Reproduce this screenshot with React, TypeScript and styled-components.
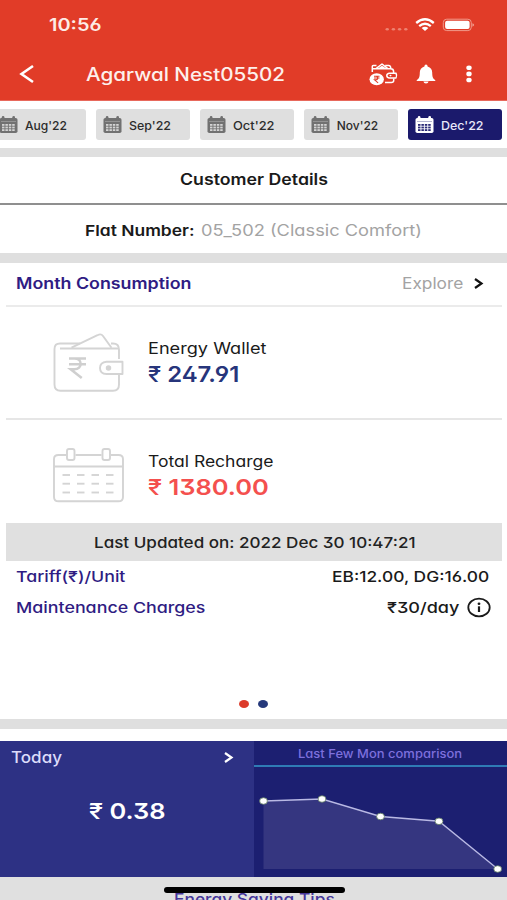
import React from 'react';
import styled, { createGlobalStyle } from 'styled-components';

const GlobalStyle = createGlobalStyle`
  * { box-sizing: border-box; }
  html, body { margin: 0; padding: 0; overflow: hidden; }
  body { background: #fff; font-family: Inter, "Liberation Sans", sans-serif; }
`;

const red = '#e13c28';
const gray = '#dfdfdf';
const indigo = '#2f1c83';

const Screen = styled.div`
  width: 507px;
  height: 900px;
  overflow: hidden;
  background: #fff;
  display: flex;
  flex-direction: column;
`;

/* Text drawn in an extended width: the slot reserves the final width. */
const Slot = styled.span<{ $w: number }>`
  display: block;
  flex: none;
  width: ${(p) => p.$w}px;
`;

const Glyphs = styled.span<{ $size: number; $weight: number; $color: string; $sx: number; $dy: number }>`
  display: inline-block;
  vertical-align: top;
  white-space: pre;
  line-height: 20px;
  font-size: ${(p) => p.$size}px;
  font-weight: ${(p) => p.$weight};
  font-feature-settings: 'cv11', 'ss01';
  color: ${(p) => p.$color};
  transform-origin: 0 50%;
  transform: translateY(${(p) => p.$dy}px) scaleX(${(p) => p.$sx});
`;

const Currency = styled.span`
  font-weight: 500;
`;

type LabelProps = {
  children: React.ReactNode;
  w: number;
  sx: number;
  size?: number;
  weight?: number;
  color?: string;
  dy?: number;
};

function Label({ children, w, sx, size = 15.5, weight = 400, color = '#1a1a1a', dy = 0 }: LabelProps) {
  return (
    <Slot $w={w}>
      <Glyphs $size={size} $weight={weight} $color={color} $sx={sx} $dy={dy}>{children}</Glyphs>
    </Slot>
  );
}

const Header = styled.header`
  flex: none;
  height: 101px;
  background: ${red};
  border-bottom: 1px solid #e8695c;
`;

const StatusBar = styled.div`
  display: flex;
  align-items: center;
  justify-content: space-between;
  height: 49px;
  padding: 0 31px 0 49px;
`;

const StatusIcons = styled.div`
  display: flex;
  align-items: center;
`;

const TitleBar = styled.div`
  display: flex;
  align-items: center;
  height: 50px;
  padding: 0 35px 0 20px;
`;

const TitleSlot = styled.div`
  flex: 1;
  margin-left: 52px;
`;

const Actions = styled.div`
  display: flex;
  align-items: center;
`;

const Tabs = styled.nav`
  flex: none;
  display: flex;
  gap: 9.7px;
  height: 47px;
  padding: 8px 5px 0 0;
  justify-content: flex-end;
`;

const Tab = styled.div<{ $active?: boolean }>`
  flex: none;
  display: flex;
  align-items: center;
  gap: 7px;
  width: 94.3px;
  height: 31px;
  padding-left: 7px;
  border-radius: 3px;
  background: ${(p) => (p.$active ? '#1b1a6c' : gray)};
`;

const Band = styled.div<{ $h: number }>`
  flex: none;
  height: ${(p) => p.$h}px;
  background: ${gray};
`;

const CenterRow = styled.div<{ $h: number; $line?: boolean }>`
  flex: none;
  display: flex;
  justify-content: center;
  align-items: center;
  gap: 6px;
  height: ${(p) => p.$h}px;
  border-bottom: ${(p) => (p.$line ? '2px solid #8f8f8f' : '0')};
`;

const Card = styled.section`
  flex: none;
  height: 456px;
  padding: 0 5px 0 6px;
`;

const CardHead = styled.div`
  display: flex;
  align-items: center;
  height: 44px;
  padding: 0 19px 2px 10px;
  border-bottom: 2px solid #ebebeb;
`;

const Spacer = styled.div`
  flex: 1;
`;

const Metric = styled.div<{ $h: number; $top: number; $line?: boolean }>`
  display: flex;
  height: ${(p) => p.$h}px;
  padding: ${(p) => p.$top}px 0 0 46px;
  gap: 23px;
  border-bottom: ${(p) => (p.$line ? '2px solid #e6e6e6' : '0')};
`;

const MetricText = styled.div`
  display: flex;
  flex-direction: column;
  gap: 6px;
  padding-top: 5px;
`;

const Updated = styled.div`
  display: flex;
  align-items: center;
  justify-content: center;
  height: 38px;
  background: #e0e0e0;
`;

const InfoRow = styled.div<{ $pad: number }>`
  display: flex;
  align-items: center;
  justify-content: space-between;
  height: 31px;
  padding: 0 ${(p) => p.$pad}px 0 9.5px;
`;

const WithIcon = styled.div`
  display: flex;
  align-items: center;
  gap: 7px;
`;

const Pager = styled.div`
  display: flex;
  justify-content: center;
  gap: 9px;
  padding: 77px 1px 0 0;
`;

const Dot = styled.i<{ $color: string }>`
  width: 10px;
  height: 8px;
  border-radius: 50%;
  background: ${(p) => p.$color};
`;

const Panels = styled.section`
  flex: none;
  display: grid;
  grid-template-columns: 253.5px 1fr;
  height: 136px;
  margin-top: 12px;
`;

const TodayPanel = styled.div`
  background: #2d3184;
`;

const TodayHead = styled.div`
  display: flex;
  align-items: center;
  justify-content: space-between;
  height: 32px;
  padding: 0 20.5px 0 10.5px;
`;

const TodayValue = styled.div`
  display: flex;
  justify-content: center;
  padding-top: 28px;
`;

const ChartPanel = styled.div`
  background: #1c1f71;
`;

const ChartTitle = styled.div`
  display: flex;
  align-items: center;
  justify-content: center;
  height: 26px;
  border-bottom: 2px solid #2f7bb5;
`;

const Footer = styled.footer`
  position: relative;
  flex: none;
  display: flex;
  justify-content: center;
  height: 23px;
  padding-top: 12px;
  background: #e0e0e0;
`;

const HomeIndicator = styled.div`
  position: absolute;
  top: 10px;
  left: 163.5px;
  width: 181px;
  height: 5.5px;
  border-radius: 3px;
  background: #000;
`;

const Svg = styled.svg`
  display: block;
  flex: none;
  overflow: visible;
`;

const Rupee = ({ x, y, w, h, sw, color }: { x: number; y: number; w: number; h: number; sw: number; color: string }) => (
  <g transform={`translate(${x} ${y}) scale(${w / 16} ${h / 20})`} fill="none" stroke={color} strokeWidth={sw}>
    <path d="M0 1H16M0 6.5H16M0 1H5C13 1 13 11.5 5 11.5H1.5L12 20" />
  </g>
);

function CalendarIcon({ active }: { active?: boolean }) {
  const body = active ? '#fff' : '#717171';
  const cell = active ? '#2a2976' : '#d4d4d4';
  return (
    <Svg width="19" height="17" viewBox="0 0 19 17">
      <rect x="0.5" y="2" width="18" height="15" rx="1.8" fill={body} />
      <rect x="2.8" y="0" width="2.6" height="4" rx="1.2" fill={body} />
      <rect x="13.4" y="0" width="2.6" height="4" rx="1.2" fill={body} />
      <rect x="2" y="5.1" width="15" height="0.7" fill={cell} opacity="0.5" />
      {[8, 10.6, 13.2].map((y) =>
        [3, 6.4, 9.8, 13.2].map((x) => <rect key={`${x}-${y}`} x={x} y={y} width="2.5" height="1.8" fill={cell} />),
      )}
    </Svg>
  );
}

const Chevron = ({ color, w, h, sw, left }: { color: string; w: number; h: number; sw: number; left?: boolean }) => (
  <Svg width={w} height={h} viewBox={`0 0 ${w} ${h}`}>
    <path
      d={left ? `M${w - 1} 1L1.5 ${h / 2}L${w - 1} ${h - 1}` : `M1 1L${w - 1.5} ${h / 2}L1 ${h - 1}`}
      fill="none"
      stroke={color}
      strokeWidth={sw}
    />
  </Svg>
);

const SignalIcons = () => (
  <Svg width="92" height="16" viewBox="0 0 92 16">
    {[3.2, 9.4, 15.6, 21.8].map((x) => <ellipse key={x} cx={x} cy="12.2" rx="1.7" ry="1.3" fill="#ee8271" />)}
    <g fill="none" stroke="#fff" strokeWidth="2.3">
      <path d="M32.2 6Q41 -1.5 49.8 6" />
      <path d="M35.2 9.2Q41 4.4 46.8 9.2" />
    </g>
    <path d="M37.6 11Q41 8.4 44.4 11L41 14Z" fill="#fff" />
    <rect x="59.3" y="2.2" width="28" height="11.4" rx="3.4" fill="none" stroke="#f19a8b" strokeWidth="1" />
    <rect x="61.1" y="3.8" width="24.5" height="8.3" rx="2" fill="#fff" />
    <path d="M88.4 6.2Q92 7.9 88.4 9.7Z" fill="#f19a8b" />
  </Svg>
);

const WalletSmall = () => (
  <Svg width="29" height="23" viewBox="0 0 29 23">
    <g fill="none" stroke="#fff" strokeWidth="1.5" strokeLinejoin="round">
      <path d="M3.3 9V3.2Q3.3 2.4 4.3 2.4H7.5M3.5 5.8H21.5Q24.6 5.8 24.6 8.5V10M7 5.6L13 1L18.8 5.6M10 5.6L13 3.6L16 5.6M16.2 2.4H19.6Q21.8 2.4 21.8 5.6" />
      <path d="M27 10.2H20.6Q17.8 10.4 17.8 12.6Q17.8 15 20.6 15H27Q28.2 12.6 27 10.2Z" />
      <path d="M24.7 15.4V17.4Q24.7 19.4 22.3 19.4H16" />
    </g>
    <ellipse cx="21.5" cy="12.6" rx="1" ry="0.8" fill="#fff" />
    <ellipse cx="7.7" cy="16.2" rx="7.2" ry="6" fill="#fff" />
    <Rupee x={5} y={12.8} w={5.5} h={7} sw={3} color={red} />
  </Svg>
);

const Bell = () => (
  <Svg width="20" height="20" viewBox="0 0 20 20">
    <path d="M10 .6Q11.6.6 11.6 2.4Q16.2 3.8 16.2 8.5C16.2 13 17 14.5 19.3 16.2V17H.7V16.2C3 14.5 3.8 13 3.8 8.5Q3.8 3.8 8.4 2.4Q8.4.6 10 .6Z" fill="#fff" />
    <path d="M7.4 17.6H12.6Q12.2 19.6 10 19.6T7.4 17.6Z" fill="#fff" />
  </Svg>
);

const More = () => (
  <Svg width="6" height="18" viewBox="0 0 6 18">
    {[2.8, 8.9, 15].map((y) => <ellipse key={y} cx="3" cy={y} rx="2.7" ry="2.3" fill="#fff" />)}
  </Svg>
);

const WalletLarge = () => (
  <Svg width="73" height="60" viewBox="0 0 73 60">
    <g fill="none" stroke="#d4d4d4" strokeWidth="1.9" strokeLinejoin="round">
      <path d="M67 26V16.5Q67 10.5 61 10.5H59M28 10.5H8Q2.5 10.5 2.5 16V51.5Q2.5 57.7 8.5 57.7H61Q67 57.7 67 51.5V41.5" />
      <path d="M8 15.5H66" />
      <path d="M19.5 14.7L45.5 2.2Q49 .2 51 3L59.5 14.7" />
      <path d="M70.5 28.7H54.5Q48 29.3 48 35T54.5 41H70.5Z" />
      <circle cx="56.5" cy="35" r="1.8" fill="#d4d4d4" />
    </g>
    <Rupee x={17} y={24.5} w={17} h={20.5} sw={2.4} color="#cfcfcf" />
  </Svg>
);

const CalendarLarge = () => (
  <Svg width="73" height="56" viewBox="0 0 73 56">
    <g fill="none" stroke="#d4d4d4" strokeWidth="1.9">
      <path d="M14 8H6.5Q2 8 2 12V50Q2 54.3 6.5 54.3H66.5Q71 54.3 71 50V12Q71 8 66.5 8H59M23.5 8H49.5M2 19.5H71" />
      <rect x="15" y="2" width="7.5" height="11" rx="2" />
      <rect x="50.5" y="2" width="7.5" height="11" rx="2" />
      {[28, 36.7, 45.5].map((y) =>
        [10.5, 25, 39.5, 54].map((x) => <path key={`${x}-${y}`} d={`M${x} ${y}H${x + 7.5}`} />),
      )}
    </g>
  </Svg>
);

const InfoIcon = () => (
  <Svg width="24" height="20" viewBox="0 0 24 20">
    <ellipse cx="12" cy="9.5" rx="10.7" ry="8.9" fill="none" stroke="#1a1a1a" strokeWidth="1.8" />
    <ellipse cx="12" cy="5.8" rx="1.4" ry="1.2" fill="#1a1a1a" />
    <path d="M12 8.3V14" stroke="#1a1a1a" strokeWidth="2.2" />
  </Svg>
);

const points: [number, number][] = [[9.5, 34], [68, 32], [126.5, 49.5], [185, 54.3], [243.7, 102]];

function Chart() {
  const line = points.map((p) => p.join(',')).join(' ');
  return (
    <Svg width="253" height="110" viewBox="0 0 253 110">
      <polygon points={`${line} 9.5,102`} fill="#353680" />
      <polyline points={line} fill="none" stroke="#b9b9e4" strokeWidth="1.4" />
      {points.map(([x, y]) => (
        <ellipse key={x} cx={x} cy={y} rx="3.9" ry="3.3" fill="#fff" stroke="#5d7a5e" strokeWidth="0.8" />
      ))}
    </Svg>
  );
}

const months: [string, number, number][] = [
  ["Aug'22", 42, 1.007],
  ["Sep'22", 42, 1.035],
  ["Oct'22", 41.5, 1.071],
  ["Nov'22", 41.5, 1],
  ["Dec'22", 42.5, 1.037],
];

export default function App() {
  return (
    <>
      <GlobalStyle />
      <Screen>
        <Header>
          <StatusBar>
            <Label w={52.5} sx={1.172} size={17} weight={600} color="#fdebe6">10:56</Label>
            <StatusIcons><SignalIcons /></StatusIcons>
          </StatusBar>
          <TitleBar>
            <Chevron left color="#fff" w={14} h={18} sw={2.6} />
            <TitleSlot>
              <Label w={199} sx={1.146} size={18} weight={500} color="#fdf0ec" dy={0.7}>Agarwal Nest05502</Label>
            </TitleSlot>
            <Actions>
              <WalletSmall />
              <Slot $w={18} />
              <Bell />
              <Slot $w={30} />
              <More />
            </Actions>
          </TitleBar>
        </Header>

        <Tabs>
          {months.map(([name, w, sx]) => (
            <Tab key={name} $active={name.startsWith('Dec')}>
              <CalendarIcon active={name.startsWith('Dec')} />
              <Label w={w} sx={sx} size={12} weight={500} color={name.startsWith('Dec') ? '#e9e8fa' : '#2c2c2c'} dy={0.5}>{name}</Label>
            </Tab>
          ))}
        </Tabs>
        <Band $h={9} />
        <CenterRow $h={48} $line>
          <Label w={148} sx={1.144} weight={600}>Customer Details</Label>
        </CenterRow>
        <CenterRow $h={48}>
          <Label w={109.5} sx={1.162} size={15} weight={600} dy={2}>Flat Number:</Label>
          <Label w={221} sx={1.177} color="#a3a3a3" dy={2}>05_502 (Classic Comfort)</Label>
        </CenterRow>
        <Band $h={10} />

        <Card>
          <CardHead>
            <Label w={174.5} sx={1.15} weight={600} color={indigo} dy={0.6}>Month Consumption</Label>
            <Spacer />
            <Label w={60.5} sx={1.115} color="#a3a3a3" dy={0.6}>Explore</Label>
            <Slot $w={11.5} />
            <Chevron color="#111" w={9} h={11} sw={2.2} />
          </CardHead>
          <Metric $h={113} $top={26} $line>
            <WalletLarge />
            <MetricText>
              <Label w={117.5} sx={1.17} dy={1}>Energy Wallet</Label>
              <Label w={90.5} sx={1.085} size={22} weight={600} color="#27357b"><Currency>₹</Currency> 247.91</Label>
            </MetricText>
          </Metric>
          <Metric $h={103} $top={27}>
            <CalendarLarge />
            <MetricText>
              <Label w={124.5} sx={1.13}>Total Recharge</Label>
              <Label w={120} sx={1.157} size={22} weight={600} color="#f4504e" dy={-1}><Currency>₹</Currency> 1380.00</Label>
            </MetricText>
          </Metric>
          <Updated>
            <Label w={320} sx={1.137} size={15} weight={450} color="#222" dy={0.7}>Last Updated on: 2022 Dec 30 10:47:21</Label>
          </Updated>
          <InfoRow $pad={14.5}>
            <Label w={108.5} sx={1.185} size={15} weight={450} color={indigo}>Tariff(₹)/Unit</Label>
            <Label w={156} sx={1.159} size={15} weight={450}>EB:12.00, DG:16.00</Label>
          </InfoRow>
          <InfoRow $pad={11.5}>
            <Label w={187.5} sx={1.189} size={15} weight={450} color={indigo}>Maintenance Charges</Label>
            <WithIcon>
              <Label w={72.5} sx={1.205} size={15} weight={450}>₹30/day</Label>
              <InfoIcon />
            </WithIcon>
          </InfoRow>
          <Pager>
            <Dot $color="#dc3b2a" />
            <Dot $color="#25397b" />
          </Pager>
        </Card>
        <Band $h={10} />

        <Panels>
          <TodayPanel>
            <TodayHead>
              <Label w={50.5} sx={1.1} weight={500} color="#dcdcfa" dy={0.5}>Today</Label>
              <Chevron color="#fff" w={9} h={11} sw={2.2} />
            </TodayHead>
            <TodayValue>
              <Label w={76} sx={1.155} size={22} weight={600} color="#fff"><Currency>₹</Currency> 0.38</Label>
            </TodayValue>
          </TodayPanel>
          <ChartPanel>
            <ChartTitle>
              <Label w={164} sx={1.082} size={12} weight={500} color="#7d70dd" dy={1}>Last Few Mon comparison</Label>
            </ChartTitle>
            <Chart />
          </ChartPanel>
        </Panels>

        <Footer>
          <Label w={160} sx={1.12} weight={450} color="#46379b" dy={1}>Energy Saving Tips</Label>
          <HomeIndicator />
        </Footer>
      </Screen>
    </>
  );
}
